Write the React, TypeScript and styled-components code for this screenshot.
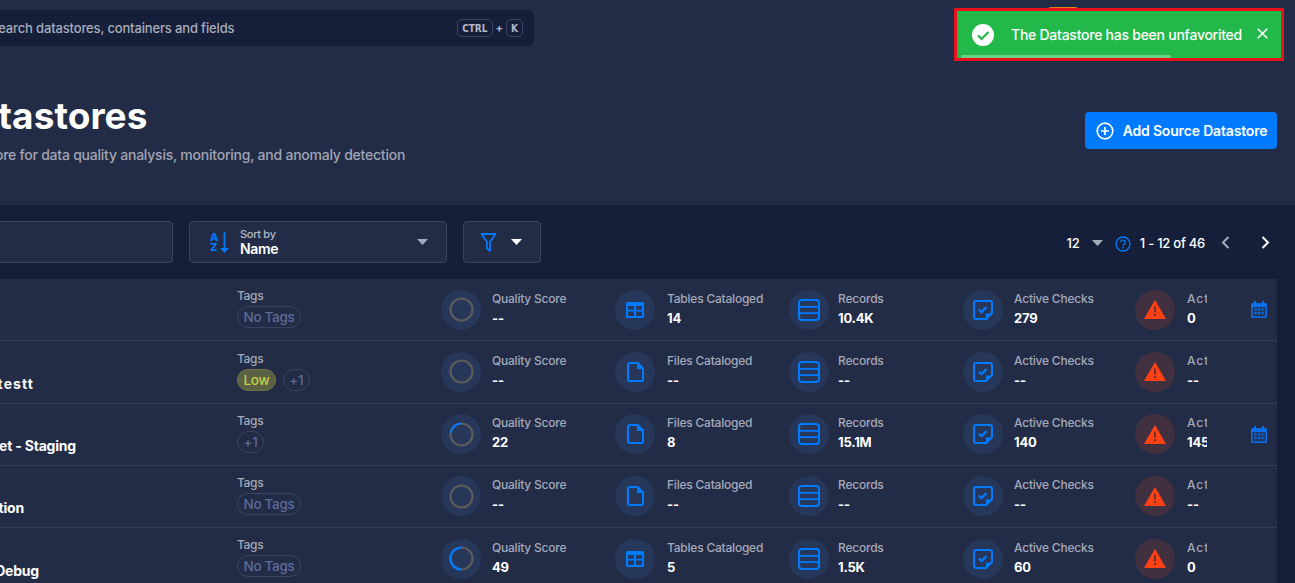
import React from "react";
import styled, { createGlobalStyle } from "styled-components";

const GlobalStyle = createGlobalStyle`
  html, body {
    margin: 0;
    padding: 0;
    height: 100%;
    overflow: hidden;
    background: #161f3a;
  }
  * {
    box-sizing: border-box;
  }
`;

type RowData = {
  name: string;
  namePad: number;
  nameSpacing?: number;
  tags: string[];
  score: string;
  progress: number;
  catalog: "Tables" | "Files";
  catalogValue: string;
  records: string;
  checks: string;
  anomalies: string;
  calendar?: boolean;
};

const rows: RowData[] = [
  { name: "", namePad: 0, tags: ["No Tags"], score: "--", progress: 0, catalog: "Tables", catalogValue: "14", records: "10.4K", checks: "279", anomalies: "0", calendar: true },
  { name: "Bank Loans Big Query testt", namePad: 203, nameSpacing: 1.1, tags: ["Low", "+1"], score: "--", progress: 0, catalog: "Files", catalogValue: "--", records: "--", checks: "--", anomalies: "--" },
  { name: "Analytics Bucket - Staging", namePad: 161, tags: ["+1"], score: "22", progress: 22, catalog: "Files", catalogValue: "8", records: "15.1M", checks: "140", anomalies: "145", calendar: true },
  { name: "Consolidated Production", namePad: 213, tags: ["No Tags"], score: "--", progress: 0, catalog: "Files", catalogValue: "--", records: "--", checks: "--", anomalies: "--" },
  { name: "Snowflake Debug", namePad: 198, tags: ["No Tags"], score: "49", progress: 49, catalog: "Tables", catalogValue: "5", records: "1.5K", checks: "60", anomalies: "0" },
];

function TableIcon() {
  return (
    <svg width="18" height="16" viewBox="0 0 18 16">
      <path fill="#007bff" fillRule="evenodd" d="M1.500 0h15A1.500 1.500 0 0 1 18 1.500v13a1.500 1.500 0 0 1-1.500 1.500h-15A1.500 1.500 0 0 1 0 14.500v-13A1.500 1.500 0 0 1 1.500 0zM2 4v3.800h6V4zm8 0v3.800h6V4zM2 9.500V14h6V9.500zm8 0V14h6V9.500z" />
    </svg>
  );
}

function FileIcon() {
  return (
    <svg width="17" height="20" viewBox="0 0 17 20">
      <path fill="none" stroke="#007bff" strokeWidth="2" strokeLinejoin="round" d="M2.500 1h8L16 6.500V17.500a1.500 1.500 0 0 1-1.500 1.500h-12A1.500 1.500 0 0 1 1 17.500v-15A1.500 1.500 0 0 1 2.500 1z" />
      <path fill="#007bff" d="M10 .5h1l5.500 5.500V7H10z" />
    </svg>
  );
}

function RecordsIcon() {
  return (
    <svg width="22" height="22" viewBox="0 0 22 22">
      <rect x="1" y="1" width="20" height="20" rx="3" fill="none" stroke="#007bff" strokeWidth="2" />
      <path stroke="#007bff" strokeWidth="1.800" d="M1.500 7.800h19M1.500 14.200h19" />
    </svg>
  );
}

function ChecksIcon() {
  return (
    <svg width="20" height="20" viewBox="0 0 20 20">
      <path fill="none" stroke="#007bff" strokeWidth="2" strokeLinejoin="round" d="M3 1h14a2 2 0 0 1 2 2V13l-6 6H3a2 2 0 0 1-2-2V3a2 2 0 0 1 2-2z" />
      <path fill="#007bff" d="M13 13.500h6.500L13 20z" />
      <path fill="none" stroke="#007bff" strokeWidth="2.200" d="M5.800 9.500l2.700 2.600 5-5" />
    </svg>
  );
}

function AlertIcon() {
  return (
    <svg width="22" height="19" viewBox="0 0 22 19">
      <path fill="#ff4114" d="M11 0L22 19H0z" />
      <path stroke="#41303f" strokeWidth="1.600" d="M11 6.500v6M11 14v2" />
    </svg>
  );
}

function CalendarIcon() {
  return (
    <svg width="16" height="17" viewBox="0 0 16 17">
      <path fill="#0a6fe8" d="M3 0h2v2h6V0h2v2h1.500A1.500 1.500 0 0 1 16 3.500v12a1.500 1.500 0 0 1-1.500 1.500h-13A1.500 1.500 0 0 1 0 15.500v-12A1.500 1.500 0 0 1 1.500 2H3z" />
      <rect x="1.500" y="6" width="13" height="9.500" fill="#1d3a6b" />
      <path fill="#0a6fe8" d="M3.500 7.500h2v2h-2zM7 7.500h2v2H7zM10.500 7.500h2v2h-2zM3.500 11h2v2h-2zM7 11h2v2H7zM10.500 11h2v2h-2z" />
    </svg>
  );
}

function Ring({ progress }: { progress: number }) {
  const r = 11;
  const length = 2 * Math.PI * r;
  return (
    <svg width="25" height="25" viewBox="0 0 25 25">
      <circle cx="12.500" cy="12.500" r={r} fill="none" stroke="#5e5c5a" strokeWidth="2.200" />
      {progress > 0 && (
        <circle
          cx="12.500"
          cy="12.500"
          r={r}
          fill="none"
          stroke="#007bff"
          strokeWidth="2.200"
          strokeDasharray={`${(length * progress) / 100} ${length}`}
          transform="rotate(-90 12.500 12.500) scale(1 -1) translate(0 -25)"
        />
      )}
    </svg>
  );
}

function Caret({ light }: { light?: boolean }) {
  return (
    <svg width="11" height="6" viewBox="0 0 11 6">
      <path fill={light ? "#ffffff" : "#a6abb8"} d="M0 0h11L5.500 6z" />
    </svg>
  );
}

function Stat(props: { icon: React.ReactNode; label: string; value: string; gap: number; width: number; alert?: boolean }) {
  return (
    <StatCell $gap={props.gap}>
      <IconCircle $alert={props.alert}>{props.icon}</IconCircle>
      <StatText $width={props.width}>
        <StatLabel $alert={props.alert}>{props.label}</StatLabel>
        <StatValue>{props.value}</StatValue>
      </StatText>
    </StatCell>
  );
}

function App() {
  return (
    <Page>
      <GlobalStyle />
      <Canvas>
        <TopBar>
          <SearchBar>
            <SearchText>Search datastores, containers and fields</SearchText>
            <Shortcut>
              <Key>CTRL</Key>
              <Plus>+</Plus>
              <Key>K</Key>
            </Shortcut>
          </SearchBar>
          <UserBadge />
        </TopBar>
        <Header>
          <div>
            <Title>Source Datastores</Title>
            <Subtitle>Connect a source datastore for data quality analysis, monitoring, and anomaly detection</Subtitle>
          </div>
          <AddButton>
            <svg width="18" height="18" viewBox="0 0 18 18">
              <circle cx="9" cy="9" r="7.800" fill="none" stroke="#fff" strokeWidth="1.700" />
              <path stroke="#fff" strokeWidth="1.700" d="M9 5v8M5 9h8" />
            </svg>
            Add Source Datastore
          </AddButton>
        </Header>
        <Toolbar>
          <SearchField />
          <SortSelect>
            <SortLetters>
              <span>A</span>
              <span>Z</span>
            </SortLetters>
            <svg width="9" height="21" viewBox="0 0 9 21">
              <path fill="#007bff" d="M3.600 0h1.800v16H9l-4.500 5L0 16h3.600z" />
            </svg>
            <SortText>
              <SortLabel>Sort by</SortLabel>
              <SortValue>Name</SortValue>
            </SortText>
            <Caret />
          </SortSelect>
          <FilterButton>
            <svg width="17" height="19" viewBox="0 0 17 19">
              <path fill="none" stroke="#007bff" strokeWidth="1.800" strokeLinejoin="round" d="M1.500 1h14L10 9v9l-3-2.500V9z" />
            </svg>
            <Caret light />
          </FilterButton>
          <Pagination>
            <PageSize>12</PageSize>
            <Caret />
            <HelpIcon>
              <svg width="16" height="16" viewBox="0 0 16 16">
                <circle cx="8" cy="8" r="7" fill="none" stroke="#007bff" strokeWidth="1.300" />
                <path fill="none" stroke="#007bff" strokeWidth="1.300" d="M5.800 6.200a2.200 2.200 0 1 1 3.400 1.900c-.8.500-1.200 1-1.200 1.900" />
                <path stroke="#007bff" strokeWidth="1.400" d="M8 11v1.500" />
              </svg>
            </HelpIcon>
            <PageRange>1 - 12 of 46</PageRange>
            <Chevron $left>
              <svg width="9" height="13" viewBox="0 0 9 13">
                <path fill="none" stroke="#a6abb8" strokeWidth="2" d="M7.500 1L2 6.500 7.500 12" />
              </svg>
            </Chevron>
            <Chevron>
              <svg width="9" height="13" viewBox="0 0 9 13">
                <path fill="none" stroke="#ffffff" strokeWidth="2" d="M1.500 1L7 6.500 1.500 12" />
              </svg>
            </Chevron>
          </Pagination>
        </Toolbar>
        <List>
          {rows.map((row, i) => (
            <Row key={i}>
              <NameCell $pad={row.namePad} $spacing={row.nameSpacing ?? -0.2}>{row.name}</NameCell>
              <TagsCell>
                <TagsLabel>Tags</TagsLabel>
                <TagList>
                  {row.tags.map((tag) => (
                    <Tag key={tag} $low={tag === "Low"}>{tag}</Tag>
                  ))}
                </TagList>
              </TagsCell>
              <Stat icon={<Ring progress={row.progress} />} label="Quality Score" value={row.score} gap={11} width={110} />
              <Stat
                icon={row.catalog === "Tables" ? <TableIcon /> : <FileIcon />}
                label={`${row.catalog} Cataloged`}
                value={row.catalogValue}
                gap={12}
                width={110}
              />
              <Stat icon={<RecordsIcon />} label="Records" value={row.records} gap={9} width={110} />
              <Stat icon={<ChecksIcon />} label="Active Checks" value={row.checks} gap={11} width={110} />
              <Stat icon={<AlertIcon />} label="Active Anomalies" value={row.anomalies} gap={12} width={20} alert />
              <CalendarCell>{row.calendar && <CalendarIcon />}</CalendarCell>
            </Row>
          ))}
        </List>
      </Canvas>
      <Toast>
        <svg width="22" height="22" viewBox="0 0 22 22">
          <circle cx="11" cy="11" r="11" fill="#ffffff" />
          <path fill="none" stroke="#22b94a" strokeWidth="2.200" d="M6 11.500l3.500 3.500L16.500 8" />
        </svg>
        <ToastText>The Datastore has been unfavorited</ToastText>
        <ToastClose>
          <svg width="11" height="11" viewBox="0 0 11 11">
            <path stroke="#ffffff" strokeWidth="1.600" d="M.7.700l9.600 9.600M10.300.700L.7 10.300" />
          </svg>
        </ToastClose>
        <ToastProgress />
      </Toast>
    </Page>
  );
}

const Page = styled.div`
  position: relative;
  width: 1295px;
  height: 583px;
  overflow: hidden;
  font-family: Inter, "Liberation Sans", sans-serif;
  color: #fff;
`;

const Canvas = styled.div`
  width: 1395px;
  margin-left: -100px;
`;

const TopBar = styled.div`
  position: relative;
  height: 57px;
  padding: 10px 0 0 0;
  background: #232c47;
  border-bottom: 1px solid #28314c;
`;

const SearchBar = styled.div`
  width: 634px;
  height: 36px;
  padding: 0 11px 0 90px;
  display: flex;
  align-items: center;
  justify-content: space-between;
  background: #161f3a;
  border-radius: 6px;
`;

const SearchText = styled.span`
  font-size: 13px;
  font-weight: 500;
  letter-spacing: -0.15px;
  color: #a8adba;
`;

const Shortcut = styled.div`
  display: flex;
  align-items: center;
  gap: 3px;
`;

const Key = styled.span`
  min-width: 17px;
  height: 18px;
  padding: 0 4px;
  display: flex;
  align-items: center;
  justify-content: center;
  font-family: "DejaVu Sans Condensed", "DejaVu Sans", sans-serif;
  font-size: 10px;
  font-weight: 700;
  color: #b4b8c4;
  border: 1px solid #3c4560;
  border-radius: 5px;
`;

const Plus = styled.span`
  font-size: 11px;
  font-weight: 700;
  color: #b4b8c4;
`;

const UserBadge = styled.div`
  position: absolute;
  top: 7px;
  left: 1148px;
  width: 30px;
  height: 6px;
  background: #e8821e;
  border-radius: 3px 3px 0 0;
`;

const Header = styled.div`
  height: 148px;
  padding: 0 18px 0 0;
  display: flex;
  justify-content: space-between;
  align-items: flex-start;
  background: #232c47;
`;

const Title = styled.h1`
  margin: 37px 0 0 0;
  font-size: 37px;
  line-height: 44px;
  font-weight: 700;
  letter-spacing: 0.05px;
  text-indent: -87px;
  white-space: nowrap;
  color: #fff;
`;

const Subtitle = styled.p`
  margin: 7px 0 0 0;
  font-size: 14px;
  line-height: 20px;
  font-weight: 500;
  letter-spacing: -0.23px;
  text-indent: -63px;
  white-space: nowrap;
  color: #a0a5b4;
`;

const AddButton = styled.button`
  margin-top: 55px;
  width: 192px;
  height: 37px;
  padding: 0 0 0 1px;
  display: flex;
  align-items: center;
  justify-content: center;
  gap: 9px;
  font-family: inherit;
  font-size: 14px;
  font-weight: 600;
  letter-spacing: -0.17px;
  color: #fff;
  background: #007bff;
  border: none;
  border-radius: 4px;
`;

const Toolbar = styled.div`
  height: 74px;
  padding: 16px 0 0 0;
  display: flex;
  align-items: flex-start;
  background: #161f3a;
`;

const boxed = `
  height: 42px;
  background: #232c47;
  border: 1px solid #3b445f;
  border-radius: 4px;
`;

const SearchField = styled.div`
  ${boxed}
  width: 273px;
  margin-right: 16px;
`;

const SortSelect = styled.div`
  ${boxed}
  width: 258px;
  margin-right: 16px;
  padding: 0 18px 0 20px;
  display: flex;
  align-items: center;
`;

const SortLetters = styled.div`
  width: 9px;
  margin-right: 1px;
  display: flex;
  flex-direction: column;
  font-size: 11px;
  line-height: 10.5px;
  font-weight: 800;
  color: #007bff;
`;

const SortText = styled.div`
  flex: 1;
  margin-left: 11px;
  display: flex;
  flex-direction: column;
`;

const SortLabel = styled.span`
  font-size: 11px;
  line-height: 14px;
  font-weight: 500;
  letter-spacing: -0.3px;
  color: #b4b8c4;
`;

const SortValue = styled.span`
  font-size: 14px;
  line-height: 16px;
  font-weight: 600;
  letter-spacing: -0.3px;
  color: #fff;
`;

const FilterButton = styled.div`
  ${boxed}
  width: 78px;
  padding: 0 18px 0 16px;
  display: flex;
  align-items: center;
  justify-content: space-between;
`;

const Pagination = styled.div`
  flex: 1;
  height: 43px;
  padding-right: 25px;
  display: flex;
  align-items: center;
  justify-content: flex-end;
`;

const PageSize = styled.span`
  margin-right: 12px;
  font-size: 13px;
  font-weight: 500;
  color: #fff;
`;

const HelpIcon = styled.span`
  margin: 2px 9px 0 12px;
  display: flex;
`;

const PageRange = styled.span`
  margin-right: 16px;
  font-size: 13px;
  font-weight: 500;
  letter-spacing: -0.25px;
  color: #fff;
`;

const Chevron = styled.span<{ $left?: boolean }>`
  width: 9px;
  margin-right: ${(p) => (p.$left ? "31px" : "0")};
  display: flex;
`;

const List = styled.div`
  width: 1377px;
  background: #232c47;
`;

const Row = styled.div`
  height: 62.25px;
  display: grid;
  grid-template-columns: 337px 204px 174px 174px 174px 172px 116px 26px;
  border-bottom: 1px solid #363f5a;
`;

const NameCell = styled.div<{ $pad: number; $spacing: number }>`
  height: 100%;
  padding: 0 ${(p) => p.$pad}px 8.6px 0;
  display: flex;
  align-items: flex-end;
  justify-content: flex-end;
  white-space: nowrap;
  font-size: 14px;
  line-height: 20px;
  font-weight: 700;
  letter-spacing: ${(p) => p.$spacing}px;
  color: #fff;
`;

const TagsCell = styled.div`
  padding-top: 9.4px;
`;

const TagsLabel = styled.div`
  font-size: 12px;
  line-height: 15px;
  font-weight: 500;
  letter-spacing: -0.35px;
  color: #a4a9b8;
`;

const TagList = styled.div`
  margin-top: 3px;
  display: flex;
  gap: 7px;
`;

const Tag = styled.span<{ $low?: boolean }>`
  height: 22px;
  padding: 0 5.500px;
  display: flex;
  align-items: center;
  font-size: 13.5px;
  font-weight: 500;
  letter-spacing: -0.3px;
  color: ${(p) => (p.$low ? "#c3d04e" : "#5e6b96")};
  background: ${(p) => (p.$low ? "#5a6243" : "transparent")};
  border: 1px solid ${(p) => (p.$low ? "#6d7548" : "#3b445f")};
  border-radius: 11px;
`;

const StatCell = styled.div<{ $gap: number }>`
  display: flex;
  align-items: center;
  gap: ${(p) => p.$gap}px;
`;

const IconCircle = styled.div<{ $alert?: boolean }>`
  width: 40px;
  height: 40px;
  flex: none;
  display: flex;
  align-items: center;
  justify-content: center;
  background: ${(p) => (p.$alert ? "#41303f" : "#27375a")};
  border-radius: 50%;
`;

const StatText = styled.div<{ $width: number }>`
  width: ${(p) => p.$width}px;
  margin-top: -2px;
  overflow: hidden;
  white-space: nowrap;
`;

const StatLabel = styled.div<{ $alert?: boolean }>`
  font-size: 12px;
  line-height: 16px;
  font-weight: 500;
  letter-spacing: ${(p) => (p.$alert ? "0.9px" : "-0.22px")};
  color: #a4a9b8;
`;

const StatValue = styled.div`
  margin-top: 3px;
  font-size: 13px;
  line-height: 17px;
  font-weight: 700;
  letter-spacing: -0.2px;
  color: #fff;
`;

const CalendarCell = styled.div`
  display: flex;
  align-items: center;
`;

const Toast = styled.div`
  position: absolute;
  top: 8px;
  left: 954px;
  width: 330px;
  height: 53px;
  padding: 0 0 0 15px;
  display: flex;
  align-items: center;
  background: #22b94a;
  border: 3px solid #e8111c;
`;

const ToastText = styled.span`
  margin-left: 17px;
  font-size: 14px;
  font-weight: 500;
  letter-spacing: -0.25px;
  color: #fff;
`;

const ToastClose = styled.span`
  margin: -2px 0 0 15px;
  display: flex;
`;

const ToastProgress = styled.div`
  position: absolute;
  left: 4px;
  bottom: 0;
  width: 210px;
  height: 3px;
  background: #6cd084;
  border-radius: 2px;
`;

export default App;
